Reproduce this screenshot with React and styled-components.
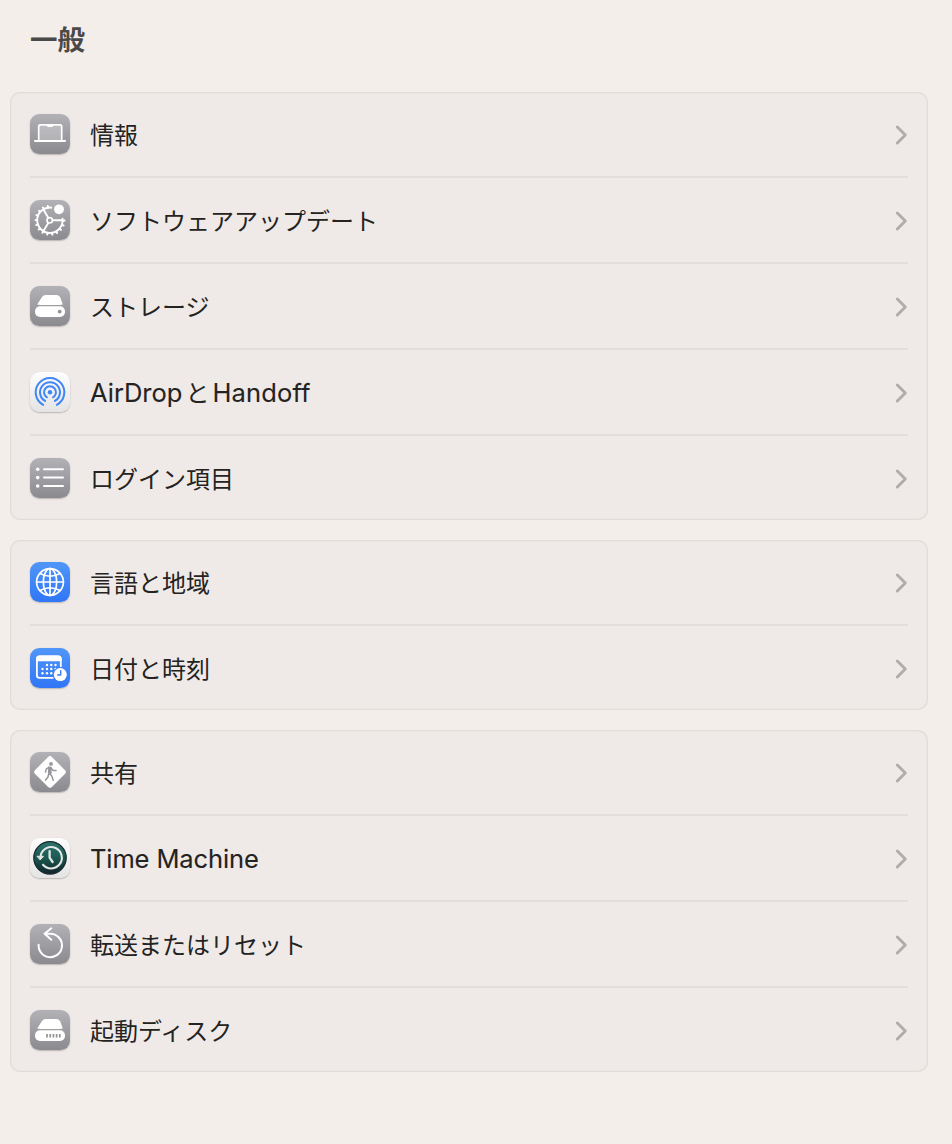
import React from 'react';
import styled, { createGlobalStyle } from 'styled-components';

const GlobalStyle = createGlobalStyle`
  body {
    margin: 0;
    background: #f3eeea;
    color: #242322;
    font-family: "Noto Sans CJK JP", sans-serif;
  }
`;

const Page = styled.main`
  box-sizing: border-box;
  min-height: 1144px;
  padding: 0 24px 0 10px;
`;

const Title = styled.h1`
  margin: 0;
  padding-left: 20px;
  height: 92px;
  box-sizing: border-box;
  padding-top: 18px;
  font-size: 27.5px;
  line-height: 40px;
  font-weight: 700;
  color: #4b4947;
`;

const Groups = styled.div`
  display: flex;
  flex-direction: column;
  gap: 20px;
`;

const Card = styled.ul`
  margin: 0;
  padding: 0 20px;
  list-style: none;
  border-radius: 10px;
  background: #efeae7;
  box-shadow: inset 0 0 0 1px #e1dcd9, inset 0 0 0 2px #ebe6e3;
`;

const Row = styled.li`
  display: flex;
  align-items: center;
  height: 84px;
  & + & {
    border-top: 2px solid #e3dedb;
  }
`;

const tones = {
  gray: 'linear-gradient(#b2b1b6, #8b8a8f)',
  blue: 'linear-gradient(#5096f8, #3076f6)',
  white: 'linear-gradient(#fdfdfd, #e4e4e4)',
};

const Tile = styled.span`
  flex: none;
  width: 40px;
  height: 40px;
  border-radius: 9.5px;
  background: ${(p) => tones[p.$tone]};
  box-shadow: 0 1px 1.5px rgba(0, 0, 0, 0.22), 0 0 1px rgba(0, 0, 0, 0.12);
  svg {
    display: block;
  }
`;

const Label = styled.span`
  flex: 1;
  margin-left: 20px;
  font-size: 24px;
  line-height: 36px;
  white-space: nowrap;
`;

const Latin = styled.span`
  font-family: Inter, sans-serif;
  font-size: 25.5px;
  letter-spacing: ${(p) => p.$track || 0}px;
  margin-left: ${(p) => p.$before || 0}px;
  margin-right: ${(p) => p.$after || 0}px;
  -webkit-text-stroke: 0.1px currentColor;
`;

const Chevron = () => (
  <svg width="16" height="22" viewBox="0 0 16 22" fill="none" stroke="#b0acaa" strokeWidth="2.9" strokeLinecap="round" strokeLinejoin="round">
    <path d="M5.300 4 L13.300 12 L5.300 20" transform="translate(0 -1)" />
  </svg>
);

const Glyph = ({ children }) => (
  <svg width="40" height="40" viewBox="0 0 40 40" fill="none" stroke="#fff" strokeLinecap="round" strokeLinejoin="round">
    {children}
  </svg>
);

const ChevronSlot = styled.span`
  flex: none;
  display: flex;
  padding-top: 2px;
`;

const Laptop = () => (
  <Glyph>
    <path d="M8.700 26V12.600Q8.700 10.900 10.400 10.900H30Q31.700 10.900 31.700 12.600V26" fill="#fff" fillOpacity=".25" strokeWidth="1.700" />
    <path d="M17 10.500h6v1.400q0 1-1 1h-4q-1 0-1-1z" fill="#fff" stroke="none" />
    <path d="M4 25.900h32v.7q0 1.500-1.500 1.500h-29Q4 28.100 4 26.600z" fill="#fff" stroke="none" />
  </Glyph>
);

const teeth = Array.from({ length: 18 }, (_, i) => i * 20 - 8).filter((a) => a < 0 || a > 75);

const Gear = () => (
  <Glyph>
    <path d="M22 7.700A12.700 12.700 0 1 0 32.400 18" strokeWidth="1.900" strokeLinecap="butt" />
    {teeth.map((a) => (
      <path key={a} d="M20 7.500L19.700 5.700" strokeWidth="1.900" transform={`rotate(${a} 20 20.300)`} />
    ))}
    <circle cx="19.700" cy="20.300" r="2.700" strokeWidth="1.700" />
    <path d="M22.600 20.300H32M18.200 17.700L13.500 9.500M18.200 22.900L13.500 31" strokeWidth="1.900" />
    <circle cx="29" cy="9.300" r="4.900" fill="#fff" stroke="none" />
  </Glyph>
);

const DriveShell = () => (
  <g fill="#fff" stroke="none">
    <path d="M11.700 11.600Q12.700 9 15.300 9H26.700Q29.300 9 30.300 11.600L32.800 18.600Q30.800 18.900 29.500 18.900H10.500Q8.500 18.900 7.200 18.600z" />
    <rect x="5" y="20.300" width="30" height="10.600" rx="5" />
  </g>
);

const Storage = () => (
  <Glyph>
    <DriveShell />
    <circle cx="29.700" cy="25.600" r="1.900" fill="#919095" stroke="none" />
  </Glyph>
);

const StartupDisk = () => (
  <Glyph>
    <DriveShell />
    <path d="M17 23.900v3.600M20.200 23.900v3.600M23.400 23.900v3.600M26.600 23.900v3.600M29.800 23.900v3.600" stroke="#929196" strokeWidth="1.700" strokeLinecap="butt" />
  </Glyph>
);

const AirDrop = () => (
  <Glyph>
    <g stroke="#3f86f6" strokeWidth="2">
      <circle cx="20" cy="20.200" r="2.200" fill="#3f86f6" stroke="none" />
      <path d="M16.900 25.300A6 6 0 1 1 23.100 25.300" />
      <path d="M15.100 28.900A10 10 0 1 1 24.900 28.900" />
      <path d="M13.200 32.800A14.300 14.300 0 1 1 26.800 32.800" />
    </g>
  </Glyph>
);

const List = () => (
  <Glyph>
    <path d="M14 11.200H33M14 19.600H33M14 28H33" strokeWidth="2" />
    <g fill="#fff" stroke="none">
      <circle cx="7.700" cy="11.200" r="1.800" />
      <circle cx="7.700" cy="19.600" r="1.800" />
      <circle cx="7.700" cy="28" r="1.800" />
    </g>
  </Glyph>
);

const Globe = () => (
  <Glyph>
    <g strokeWidth="1.700">
      <circle cx="20" cy="20" r="13.400" />
      <ellipse cx="20" cy="20" rx="6.700" ry="13.400" />
      <path d="M20 6.600V33.400M6.600 20H33.400M10 11.500Q20 17 30 11.500M10 28.500Q20 23 30 28.500" />
    </g>
  </Glyph>
);

const dots = [[17, 17], [21.3, 17], [25.5, 17], [12.5, 21], [17, 21], [21.3, 21], [25.5, 21], [12.5, 25.2], [17, 25.2], [21.3, 25.2]];

const Calendar = () => (
  <Glyph>
    <path d="M23 29.800H9.500Q6.900 29.800 6.900 27.200V11Q6.900 8.400 9.500 8.400H28.200Q30.800 8.400 30.800 11V19" strokeWidth="1.800" />
    <path d="M6.200 13.200V11Q6.200 7.600 9.500 7.600H28.200Q31.600 7.600 31.600 11V13.200z" fill="#fff" stroke="none" />
    {dots.map(([x, y]) => (
      <circle key={`${x}-${y}`} cx={x} cy={y} r="1.200" fill="#fff" stroke="none" />
    ))}
    <circle cx="30.300" cy="26.600" r="7.600" fill="#3b80f7" stroke="none" />
    <circle cx="30.300" cy="26.600" r="6.500" fill="#fff" stroke="none" />
    <path d="M30.700 22.700V26.900H27.600" stroke="#3b7ff5" strokeWidth="1.500" />
  </Glyph>
);

const Sharing = () => (
  <Glyph>
    <rect x="8" y="8" width="24" height="24" rx="3" fill="#fff" stroke="none" transform="rotate(45 20 20)" />
    <g stroke="#98979c" strokeWidth="1.500">
      <circle cx="21" cy="11.900" r="1.900" fill="#98979c" stroke="none" />
      <path d="M18.900 21.200L21.700 23.800L23.200 28.300M18.700 22L17.900 25.200L15.500 28.100M18.800 15.400L16.200 17.100L15.500 20M21.300 16.200L23 18.400L26 18.600" />
      <path d="M19 15.200L21 15.400L20.900 21.200L18.600 21z" fill="#98979c" />
    </g>
  </Glyph>
);

const TimeMachine = () => (
  <Glyph>
    <defs>
      <linearGradient id="dial" x1="0" y1="0" x2="0" y2="1">
        <stop offset="0" stopColor="#2d746c" />
        <stop offset=".5" stopColor="#1d5952" />
        <stop offset="1" stopColor="#0e2429" />
      </linearGradient>
    </defs>
    <circle cx="20" cy="19.800" r="16.200" fill="url(#dial)" stroke="#1a292c" strokeWidth="1.300" />
    <g stroke="#e3e8e6" strokeWidth="2.100">
      <path d="M10.700 17.400A10.700 10.700 0 1 1 13 26.700" />
      <path d="M19.600 13.200V19.700L22.600 24" strokeWidth="2.300" />
      <path d="M7.400 18.300H13.500L10.400 21.700z" fill="#e3e8e6" strokeWidth="1" />
    </g>
  </Glyph>
);

const Reset = () => (
  <Glyph>
    <path d="M8.600 20.800A11.700 11.700 0 1 0 20.300 9.800H14.800" strokeWidth="2" />
    <path d="M21.300 4.300L14.600 9.800L21.300 15.800" strokeWidth="2" />
  </Glyph>
);

const groups = [
  [
    { icon: Laptop, label: '情報' },
    { icon: Gear, label: 'ソフトウェアアップデート' },
    { icon: Storage, label: 'ストレージ' },
    {
      icon: AirDrop,
      tone: 'white',
      label: (
        <>
          <Latin $after={3}>AirDrop</Latin>と<Latin $before={3} $track={0.15}>Handoff</Latin>
        </>
      ),
    },
    { icon: List, label: 'ログイン項目' },
  ],
  [
    { icon: Globe, tone: 'blue', label: '言語と地域' },
    { icon: Calendar, tone: 'blue', label: '日付と時刻' },
  ],
  [
    { icon: Sharing, label: '共有' },
    { icon: TimeMachine, tone: 'white', label: <Latin $track={-0.12}>Time Machine</Latin> },
    { icon: Reset, label: '転送またはリセット' },
    { icon: StartupDisk, label: '起動ディスク' },
  ],
];

export default function App() {
  return (
    <Page lang="ja">
      <GlobalStyle />
      <Title>一般</Title>
      <Groups>
        {groups.map((rows, g) => (
          <Card key={g}>
            {rows.map(({ icon: Icon, tone = 'gray', label }, r) => (
              <Row key={r}>
                <Tile $tone={tone}>
                  <Icon />
                </Tile>
                <Label>{label}</Label>
                <ChevronSlot>
                  <Chevron />
                </ChevronSlot>
              </Row>
            ))}
          </Card>
        ))}
      </Groups>
    </Page>
  );
}
